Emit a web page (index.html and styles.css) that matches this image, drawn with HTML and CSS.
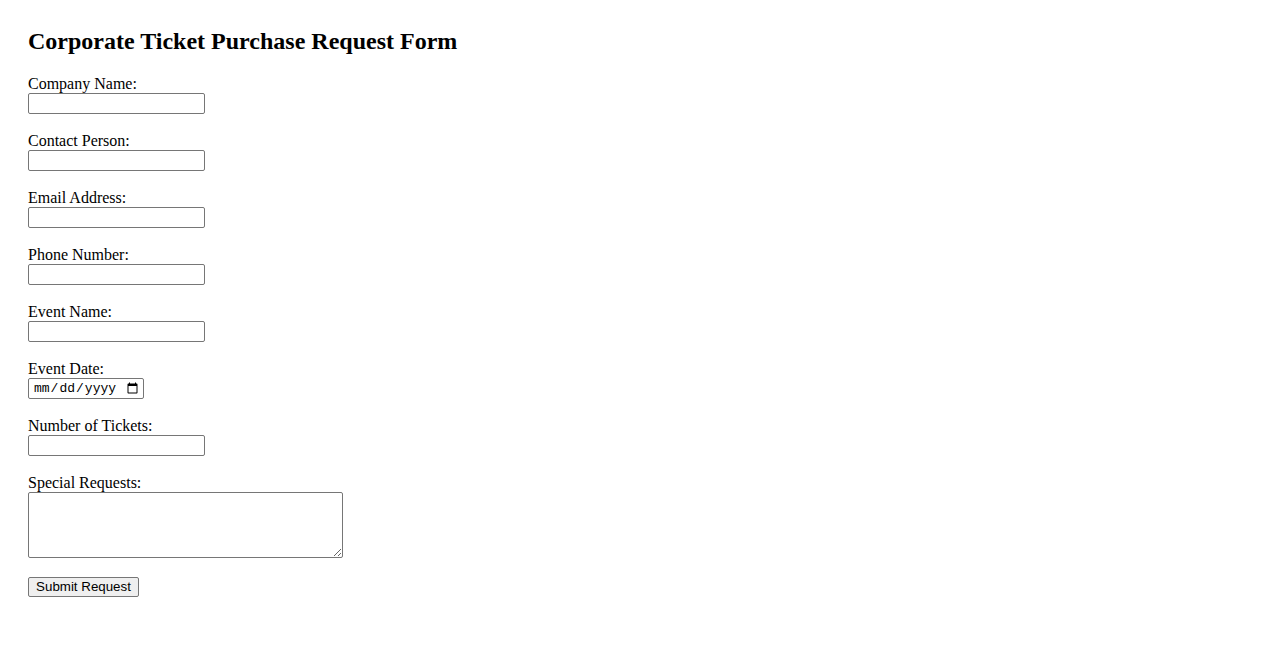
FILE: index.html
```html
<!DOCTYPE html>
<html lang="en">
<head>
<meta charset="utf-8">
<title>Corporate Ticket Purchase Request Form</title>
<link rel="stylesheet" href="styles.css">
</head>
<body>
<div class="page">
  <h2 class="title">Corporate Ticket Purchase Request Form</h2>
  <form class="form">
    <div class="field">
      <label class="label" for="company">Company Name:</label>
      <input class="text-input" type="text" id="company">
    </div>
    <div class="field">
      <label class="label" for="contact">Contact Person:</label>
      <input class="text-input" type="text" id="contact">
    </div>
    <div class="field">
      <label class="label" for="email">Email Address:</label>
      <input class="text-input" type="email" id="email">
    </div>
    <div class="field">
      <label class="label" for="phone">Phone Number:</label>
      <input class="text-input" type="tel" id="phone">
    </div>
    <div class="field">
      <label class="label" for="event">Event Name:</label>
      <input class="text-input" type="text" id="event">
    </div>
    <div class="field">
      <label class="label" for="date">Event Date:</label>
      <input class="date-input" type="date" id="date">
    </div>
    <div class="field">
      <label class="label" for="tickets">Number of Tickets:</label>
      <input class="text-input" type="number" id="tickets">
    </div>
    <div class="field field-area">
      <label class="label" for="requests">Special Requests:</label>
      <textarea class="area-input" id="requests"></textarea>
    </div>
    <div class="actions">
      <button class="submit" type="submit">Submit Request</button>
    </div>
  </form>
</div>
</body>
</html>
```

FILE: styles.css
```css
html, body {
  margin: 0;
  background: #ffffff;
}
body {
  font-family: "Liberation Serif", "Times New Roman", serif;
  font-size: 16px;
  color: #000000;
}
.page {
  padding: 27px 28px 28px;
}
.title {
  margin: 0 0 20px;
  font-size: 24px;
  font-weight: bold;
  line-height: 28px;
}
.form {
  display: flex;
  flex-direction: column;
  align-items: flex-start;
}
.field {
  display: flex;
  flex-direction: column;
  align-items: flex-start;
  margin-bottom: 18px;
}
.label {
  display: block;
  height: 18px;
  line-height: 18px;
}
.text-input,
.date-input,
.area-input {
  box-sizing: border-box;
  margin: 0;
  border: 1px solid #767676;
  border-radius: 2px;
  background: #ffffff;
  font-family: "Liberation Sans", Arial, sans-serif;
  font-size: 13.33px;
  padding: 1px 2px;
}
.text-input {
  width: 177px;
  height: 21px;
  -moz-appearance: textfield;
}
.text-input::-webkit-outer-spin-button,
.text-input::-webkit-inner-spin-button {
  -webkit-appearance: none;
  margin: 0;
}
.date-input {
  width: 116px;
  height: 21px;
  font-family: "Liberation Mono", "DejaVu Sans Mono", monospace;
  font-size: 13px;
  padding: 1px 2px 1px 4px;
}
.area-input {
  width: 315px;
  height: 66px;
  resize: both;
  font-family: "Liberation Mono", monospace;
}
.field-area {
  margin-bottom: 19px;
}
.submit {
  box-sizing: border-box;
  margin: 0;
  width: 111px;
  height: 20px;
  padding: 1px 6px;
  border: 1px solid #767676;
  border-radius: 2px;
  background: #efefef;
  color: #000000;
  font-family: "Liberation Sans", Arial, sans-serif;
  font-size: 13.33px;
  line-height: 16px;
}
```
